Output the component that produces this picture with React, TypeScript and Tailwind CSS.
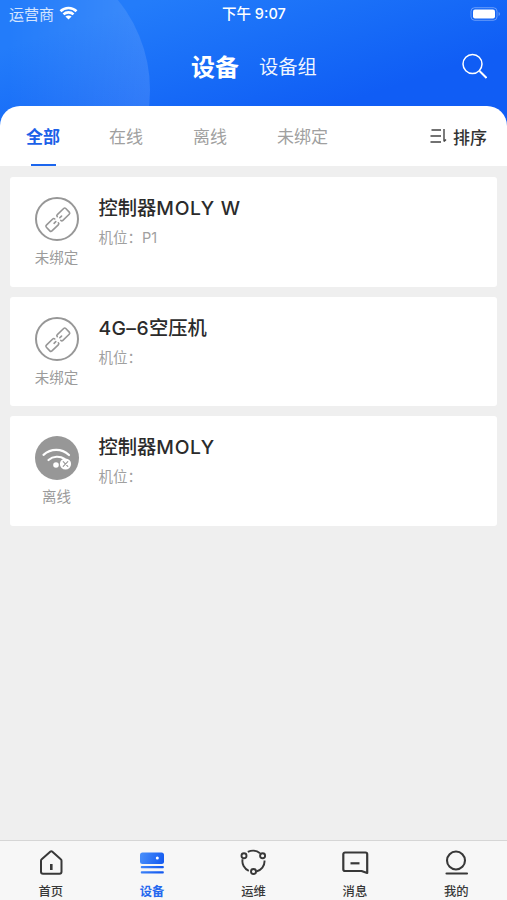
import type { ReactNode } from "react";

const CJK = "font-['Noto_Sans_CJK_SC',sans-serif]";
const MIXED = "font-['Inter','Noto_Sans_CJK_SC',sans-serif]";

function StatusBar() {
  return (
    <div className="relative flex h-7 items-center justify-between pl-[9px] pr-[6px]">
      <div className={`flex items-center gap-[5px] text-[15px] leading-7 text-white/80 ${CJK}`}>
        <span className="-mt-px">运营商</span>
        <svg className="-mt-[2px]" width="19" height="14" viewBox="0 0 18 14" fill="none" stroke="white" strokeWidth="2.6">
          <path d="M1 5.2C5.4.9 12.6.9 17 5.2" />
          <path d="M4 8.4C6.8 5.7 11.2 5.7 14 8.4" />
          <path d="M9 13.6 5.9 10.5C7.6 9 10.4 9 12.1 10.5Z" fill="white" stroke="none" />
        </svg>
      </div>
      <div className={`absolute left-[222px] top-0 text-[14.5px] font-medium leading-7 text-white ${MIXED}`}>下午 9:07</div>
      <svg className="-mt-px" width="31" height="14" viewBox="0 0 31 14" fill="none">
        <rect x="1" y=".7" width="26" height="12.6" rx="3.6" stroke="white" strokeOpacity=".35" />
        <rect x="3" y="2.6" width="22" height="8.8" rx="2" fill="white" />
        <path d="M28.6 5v4c1.7-.7 1.7-3.3 0-4Z" fill="white" fillOpacity=".4" />
      </svg>
    </div>
  );
}

function LinkBadge() {
  return (
    <svg className="shrink-0" width="44" height="44" viewBox="0 0 44 44" fill="none" stroke="#979797" strokeLinecap="round" strokeLinejoin="round">
      <circle cx="22" cy="22" r="21" strokeWidth="2" />
      <g transform="translate(22.8 22.7) rotate(-44)" strokeWidth="1.6">
        <path d="M-3.2-4H-12Q-13.500-4-13.500-2.500V2.500Q-13.500 4-12 4H-3.200Q-1.700 4-1.700 2.600M-1.700-2.600Q-1.700-4-3.200-4M-5.200 0H-2.800" />
        <path d="M3.200 4H12Q13.500 4 13.500 2.500V-2.500Q13.500-4 12-4H3.200Q1.700-4 1.700-2.600M1.700 2.600Q1.700 4 3.200 4M5.200 0H2.800" />
      </g>
    </svg>
  );
}

function OfflineBadge() {
  return (
    <svg className="shrink-0" width="44" height="44" viewBox="0 0 44 44" fill="none" strokeLinecap="round">
      <circle cx="22" cy="22" r="22" fill="#979797" />
      <path d="M8.500 18.800C16 12.200 26.500 12.200 34 19" stroke="white" strokeWidth="2.200" />
      <path d="M13.500 24C18 20 25 19.700 29.500 23" stroke="white" strokeWidth="2.200" />
      <circle cx="21" cy="29" r="2.800" fill="white" />
      <circle cx="30.500" cy="28" r="5.600" fill="white" />
      <path d="m28.200 25.700 4.600 4.600m0-4.600-4.600 4.600" stroke="#979797" strokeWidth="1.100" />
    </svg>
  );
}

function DeviceCard({ name, slot, status, icon }: { name: ReactNode; slot: string; status: string; icon: ReactNode }) {
  return (
    <div className="flex h-[109.700px] rounded-[3px] bg-white pl-[24.500px] pt-[20px]">
      <div className="flex w-11 flex-col items-center">
        {icon}
        <span className={`mt-[5px] whitespace-nowrap text-[14.500px] leading-[22px] text-[#9b9b9b] ${CJK}`}>{status}</span>
      </div>
      <div className="ml-5 flex flex-col">
        <span className={`-mt-[2px] text-[19.300px] font-medium leading-[27px] text-[#2b2b2b] ${MIXED}`}>{name}</span>
        <span className={`mt-[6px] text-[14.500px] leading-[20px] text-[#a0a0a0] ${MIXED}`}>机位：{slot}</span>
      </div>
    </div>
  );
}

const devices = [
  { id: 1, name: <>控制器<span className="tracking-[.7px]">MOLY W</span></>, slot: "P1", status: "未绑定", icon: <LinkBadge /> },
  { id: 2, name: <><span className="tracking-[.4px]">4G–6</span>空压机</>, slot: "", status: "未绑定", icon: <LinkBadge /> },
  { id: 3, name: <>控制器<span className="tracking-[.7px]">MOLY</span></>, slot: "", status: "离线", icon: <OfflineBadge /> },
];

const navItems = [
  {
    label: "首页",
    icon: (
      <svg width="28" height="28" viewBox="0 0 28 28" fill="none" stroke="#383838" strokeWidth="2" strokeLinecap="round" strokeLinejoin="round">
        <path d="M13.500 2.500a1.300 1.300 0 0 1 1.600 0l8.700 7.800q.700.600.700 1.500V22.800a2 2 0 0 1-2 2H6a2 2 0 0 1-2-2V11.800q0-.900.700-1.500Z" />
        <path d="M14.300 15v6" strokeWidth="2.600" strokeLinecap="butt" />
      </svg>
    ),
  },
  {
    label: "设备",
    icon: (
      <svg width="28" height="28" viewBox="0 0 28 28">
        <defs>
          <linearGradient id="device" gradientUnits="userSpaceOnUse" x1="2" y1="4" x2="26" y2="12">
            <stop stopColor="#4a90fb" />
            <stop offset="1" stopColor="#155bf0" />
          </linearGradient>
        </defs>
        <rect x="2" y="3.500" width="24" height="11.500" rx="2.500" fill="url(#device)" />
        <circle cx="19.300" cy="9" r="1.500" fill="white" />
        <rect x="2.800" y="17" width="23" height="2.300" rx=".800" fill="url(#device)" />
        <rect x="2.800" y="22.300" width="23" height="2.300" rx=".800" fill="url(#device)" />
      </svg>
    ),
  },
  {
    label: "运维",
    icon: (
      <svg width="28" height="28" viewBox="0 0 28 28" fill="none" stroke="#383838" strokeWidth="1.900">
        <circle cx="5" cy="6.700" r="2.500" />
        <circle cx="23.600" cy="6.700" r="2.500" />
        <circle cx="14.500" cy="22.500" r="2.500" />
        <path d="M8.800 2.900C12.500 1.200 17.500 1.300 21 4.200M3.600 10.200C2.600 15 5.200 19.800 9.800 21.800M25.500 11.500C25.900 17 22.200 21.500 17.300 22.500" />
      </svg>
    ),
  },
  {
    label: "消息",
    icon: (
      <svg width="28" height="28" viewBox="0 0 28 28" fill="none" stroke="#383838" strokeWidth="2.200" strokeLinejoin="round">
        <path d="M4 3.500H24.500a1.700 1.700 0 0 1 1.700 1.700V24L20.500 22H4a1.700 1.700 0 0 1-1.700-1.700V5.200A1.700 1.700 0 0 1 4 3.500Z" />
        <path d="M9.500 14.300h9" />
      </svg>
    ),
  },
  {
    label: "我的",
    icon: (
      <svg width="28" height="28" viewBox="0 0 28 28" fill="none" stroke="#383838" strokeWidth="2.100">
        <circle cx="14" cy="11.500" r="9" />
        <path d="M4.500 24.500H25" strokeLinecap="round" />
      </svg>
    ),
  },
];

export default function App() {
  return (
    <div className={`flex h-[900px] w-[507px] flex-col overflow-hidden bg-[#efefef] ${CJK}`}>
      <header className="relative h-[166px] shrink-0 overflow-hidden bg-linear-to-br from-[#237cfa] from-15% to-[#105df5] to-65%">
        <div className="absolute -left-[134px] -top-[52px] size-[284px] rounded-full bg-linear-to-r from-white/0 from-50% to-white/12" />
        <div className="relative flex h-full flex-col">
          <StatusBar />
          <div className="flex h-[78px] items-center pl-[191px] pr-[20px] text-white">
            <span className="-mt-[3px] text-[24px] font-bold leading-9">设备</span>
            <span className="-mt-[3px] ml-[20px] text-[19.300px] leading-9 text-white/95">设备组</span>
            <svg className="-mt-[2px] ml-auto" width="25" height="26" viewBox="0 0 25 26" fill="none" stroke="white" strokeWidth="1.500">
              <circle cx="10.500" cy="11" r="9.500" />
              <path d="m17.500 18 7 7" strokeWidth="2" />
            </svg>
          </div>
          <nav className="flex h-[60px] items-stretch rounded-t-[20px] bg-white pl-[26px] pr-[20px] text-[17px] leading-[59px] text-[#a0a0a0]">
            <span className="relative font-bold text-[#1b61e8]">
              全部
              <span className="absolute bottom-0 left-[4.500px] h-[2.500px] w-[25px] bg-[#1b66ee]" />
            </span>
            <span className="ml-[49px]">在线</span>
            <span className="ml-[50px]">离线</span>
            <span className="ml-[50px]">未绑定</span>
            <span className="ml-auto flex items-center gap-[6px] font-medium text-[#333]">
              <svg width="17" height="16" viewBox="0 0 17 16" fill="none" stroke="#444" strokeWidth="1.400">
                <path d="M1.500 2h9.500M.5 8H11M.5 14H11M14 1v12.500M14 13.500l2-2" />
              </svg>
              排序
            </span>
          </nav>
        </div>
      </header>
      <main className="flex flex-1 flex-col gap-[10px] px-[10px] pt-[11px]">
        {devices.map(({ id, ...device }) => (
          <DeviceCard key={id} {...device} />
        ))}
      </main>
      <footer className="grid h-[60px] shrink-0 grid-cols-5 border-t border-[#d6d6d6] bg-[#f7f7f7]">
        {navItems.map((item) => (
          <div key={item.label} className="flex flex-col items-center pt-[8px]">
            {item.icon}
            <span className={item.label === "设备" ? "mt-[5px] text-[12.300px] font-bold leading-[18px] text-[#2468ef]" : "mt-[5px] text-[12.300px] font-medium leading-[18px] text-[#383838]"}>
              {item.label}
            </span>
          </div>
        ))}
      </footer>
    </div>
  );
}
